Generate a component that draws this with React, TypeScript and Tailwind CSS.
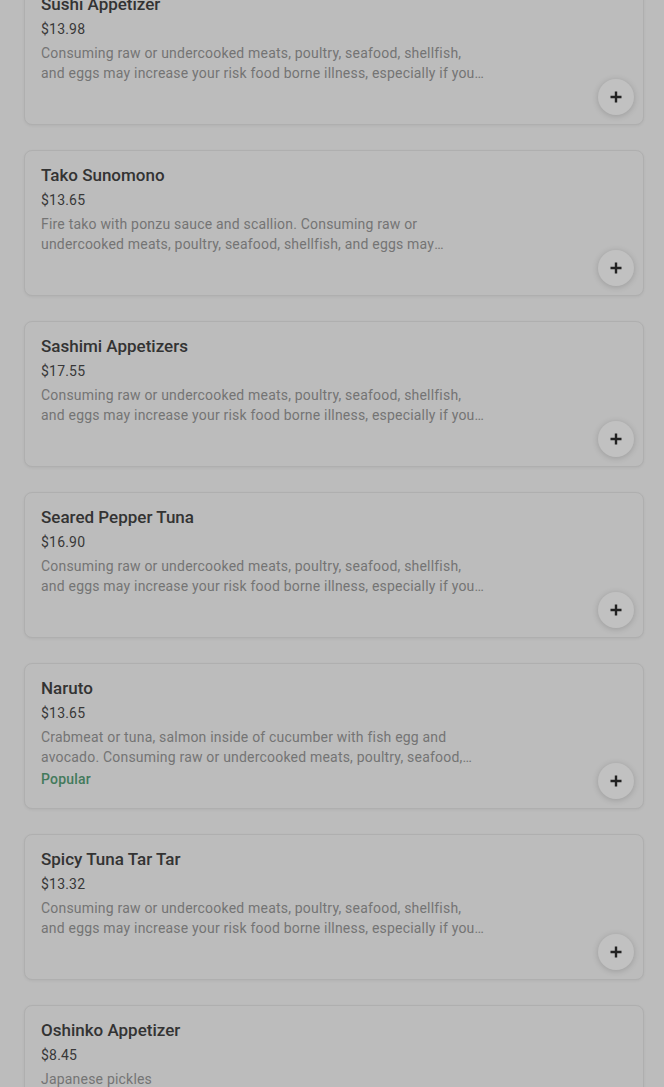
import React from "react";

type Item = {
  name: string;
  price: string;
  description: string;
  popular?: boolean;
};

const RAW =
  "Consuming raw or undercooked meats, poultry, seafood, shellfish, and eggs may increase your risk food borne illness, especially if you have certain medical conditions.";

const items: Item[] = [
  { name: "Sushi Appetizer", price: "$13.98", description: RAW },
  {
    name: "Tako Sunomono",
    price: "$13.65",
    description: "Fire tako with ponzu sauce and scallion. " + RAW,
  },
  { name: "Sashimi Appetizers", price: "$17.55", description: RAW },
  { name: "Seared Pepper Tuna", price: "$16.90", description: RAW },
  {
    name: "Naruto",
    price: "$13.65",
    description:
      "Crabmeat or tuna, salmon inside of cucumber with fish egg and avocado. " + RAW,
    popular: true,
  },
  { name: "Spicy Tuna Tar Tar", price: "$13.32", description: RAW },
  { name: "Oshinko Appetizer", price: "$8.45", description: "Japanese pickles" },
];

const PlusIcon = () => (
  <svg width="14" height="14" viewBox="0 0 14 14" fill="none">
    <path d="M7 1.5v11M1.5 7h11" stroke="#222" strokeWidth="2.4" />
  </svg>
);

const MenuCard: React.FC<{ item: Item }> = ({ item }) => (
  <div className="relative h-[146px] rounded-lg border border-[#afafaf] bg-[#bcbcbc] px-4 pt-[13px] shadow-[0_1px_3px_rgba(0,0,0,0.06)]">
    <div className="text-[17px] leading-[22px] font-medium text-[#333333]">
      {item.name}
    </div>
    <div className="mt-[4px] text-[14px] leading-[20px] tracking-[0.2px] text-[#383838]">
      {item.price}
    </div>
    <p className="mt-[4px] w-[447px] line-clamp-2 text-[14px] leading-[20px] tracking-[0.2px] text-[#747474]">
      {item.description}
    </p>
    {item.popular && (
      <div className="mt-[1px] text-[14px] leading-[22px] font-medium tracking-[0.2px] text-[#437a5b]">
        Popular
      </div>
    )}
    <button
      type="button"
      className="absolute right-[9px] bottom-[9px] flex h-9 w-9 items-center justify-center rounded-full bg-[#c1c1c1] shadow-[0_1px_6px_rgba(0,0,0,0.18)]"
    >
      <PlusIcon />
    </button>
  </div>
);

const App: React.FC = () => {
  return (
    <div
      className="h-[1087px] overflow-hidden bg-[#bcbcbc]"
      style={{ fontFamily: "Roboto, 'Liberation Sans', sans-serif" }}
    >
      <div className="-mt-[21px] flex flex-col gap-[25px] pl-6 pr-5">
        {items.map((item) => (
          <MenuCard key={item.name} item={item} />
        ))}
      </div>
    </div>
  );
};

export default App;
